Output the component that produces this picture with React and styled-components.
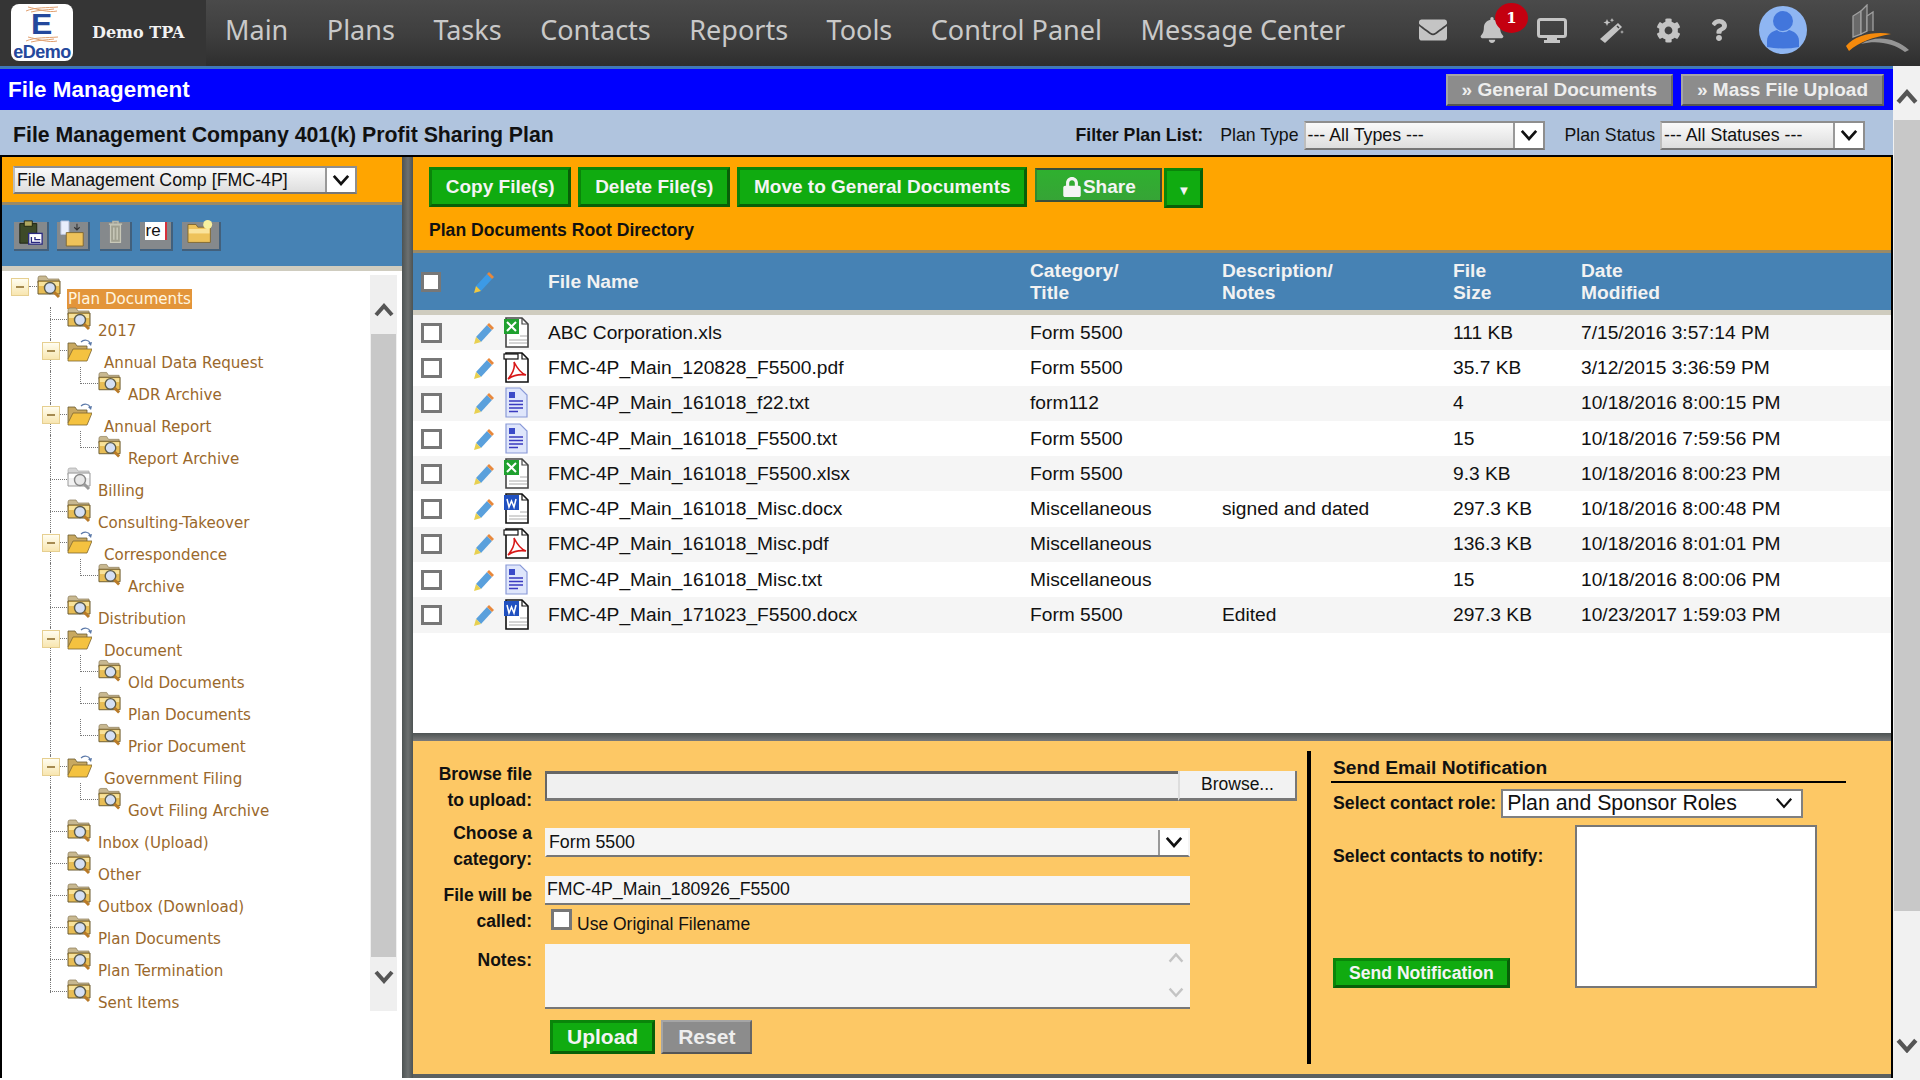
import React from 'react';
import styled, { createGlobalStyle } from 'styled-components';
import { FaEnvelope, FaBell, FaCog, FaQuestion, FaLock } from 'react-icons/fa';

const GlobalStyle = createGlobalStyle`
  html, body {
    margin: 0;
    padding: 0;
    background: #fff;
    overflow: hidden;
  }
  * {
    box-sizing: border-box;
  }
`;

const sans = `"Liberation Sans", Arial, sans-serif`;

const Page = styled.div`
  width: 1920px;
  height: 1080px;
  display: flex;
  flex-direction: column;
  font-family: ${sans};
  color: #111;
  overflow: hidden;
`;

/* top header */
const Header = styled.header`
  height: 66px;
  flex: none;
  display: flex;
  align-items: stretch;
  padding-right: 10px;
  background: linear-gradient(#4a4a4a, #3e3e3e 55%, #2e2e2e);
`;

const Brand = styled.div`
  width: 206px;
  flex: none;
  display: flex;
  align-items: center;
  padding-left: 11px;
  background: #353535;
`;

const LogoBox = styled.div`
  width: 62px;
  height: 57px;
  margin-top: -1px;
  padding-top: 2px;
  background: #fff;
  border-radius: 8px;
  display: flex;
  flex-direction: column;
  align-items: center;
  overflow: hidden;
`;

const LogoE = styled.span`
  font-size: 29px;
  font-weight: 700;
  line-height: 21px;
  height: 21px;
  margin: 1px 0;
  color: #24489c;
  transform: scaleX(1.1);
`;

const LogoWord = styled.span`
  margin-top: 2px;
  font-size: 18px;
  font-weight: 700;
  line-height: 15px;
  color: #24489c;
  letter-spacing: -0.5px;
`;

const TpaName = styled.span`
  margin-left: 19px;
  margin-top: -2px;
  font-family: "DejaVu Serif", serif;
  font-size: 16px;
  font-weight: 700;
  color: #f2f2f2;
  white-space: nowrap;
`;

const Nav = styled.nav`
  display: flex;
  align-items: center;
  gap: 38.5px;
  padding-left: 19px;
  padding-bottom: 7px;
`;

const NavItem = styled.a`
  font-family: "Noto Sans", sans-serif;
  font-size: 27px;
  color: #c9c9c9;
  white-space: nowrap;
`;

const HeaderTools = styled.div`
  margin-left: auto;
  display: flex;
  align-items: center;
  gap: 32px;
  color: #c4c4c4;
  padding-bottom: 6px;
`;

const BellWrap = styled.span`
  position: relative;
  display: flex;
`;

const Badge = styled.span`
  position: absolute;
  left: 16px;
  top: -14px;
  width: 33px;
  height: 30px;
  border-radius: 50%;
  background: #c40010;
  color: #fff;
  font-family: "DejaVu Serif", serif;
  font-size: 15px;
  font-weight: 700;
  line-height: 30px;
  text-align: center;
`;

const HelpIcon = styled(FaQuestion)`
  margin-left: -5px;
`;

const AvatarArt = styled.svg`
  margin-left: -3px;
`;

const BrandMark = styled.svg`
  margin-left: 6px;
  margin-top: -4px;
`;

/* body */
const Body = styled.div`
  flex: 1;
  display: flex;
  min-height: 0;
`;

const Content = styled.div`
  flex: 1;
  min-width: 0;
  display: flex;
  flex-direction: column;
  border-top: 3px solid #3f78b8;
`;

const PageScroll = styled.div`
  width: 27px;
  flex: none;
  display: flex;
  flex-direction: column;
  background: #f1f1f1;
`;

const ScrollBtn = styled.div`
  height: ${(p) => p.$h}px;
  flex: none;
  display: flex;
  align-items: flex-start;
  justify-content: center;
  padding-top: ${(p) => p.$pt}px;
`;

const ScrollThumb = styled.div`
  flex: 1;
  margin-left: 1px;
  background: #c8c8c8;
`;

const TitleBar = styled.div`
  height: 41px;
  flex: none;
  display: flex;
  align-items: center;
  justify-content: space-between;
  padding: 0 9px 0 8px;
  background: #0000ff;
`;

const PageTitle = styled.h1`
  margin: 0;
  font-size: 22.4px;
  font-weight: 700;
  color: #fff;
`;

const TitleActions = styled.div`
  display: flex;
  gap: 8px;
`;

const GreyButton = styled.button`
  height: ${(p) => p.$h || 32}px;
  padding: 0 ${(p) => p.$pad || 14}px;
  font-family: ${sans};
  font-size: ${(p) => p.$size || 19}px;
  font-weight: 700;
  color: #eee;
  background: #8c8c8c;
  border: 2px solid;
  border-color: #a5a5a5 #666 #555 #a5a5a5;
  white-space: nowrap;
`;

const PlanBar = styled.div`
  height: 45px;
  flex: none;
  display: flex;
  align-items: center;
  padding: 5px 28px 0 13px;
  background: #b0c4de;
`;

const PlanName = styled.h2`
  margin: 0 auto 0 0;
  font-size: 21.3px;
  font-weight: 700;
  color: #111;
`;

const BoldLabel = styled.span`
  font-size: 17.7px;
  font-weight: 700;
  white-space: nowrap;
`;

const PlainLabel = styled.span`
  font-size: 17.7px;
  white-space: nowrap;
  margin-left: ${(p) => p.$ml || 0}px;
  margin-right: 5px;
`;

const SelectBox = styled.div`
  width: ${(p) => p.$w}px;
  height: ${(p) => p.$h || 29}px;
  flex: none;
  display: flex;
  align-items: center;
  font-size: 17.8px;
  background: ${(p) => (p.$flat ? '#f5f5f5' : 'linear-gradient(#fafafa, #dedede)')};
  border: 2px solid;
  border-color: ${(p) => (p.$flat ? '#f5f5f5 #f5f5f5 #777 #f5f5f5' : '#8e8e8e #8e8e8e #777 #bdbdbd')};
`;

const SelectText = styled.span`
  flex: 1;
  padding-left: 2px;
  white-space: nowrap;
  overflow: hidden;
`;

const SelectArrow = styled.span`
  width: 30px;
  height: 100%;
  flex: none;
  display: flex;
  align-items: center;
  justify-content: center;
  background: #fff;
  border-left: 2px solid #999;
`;

const Workspace = styled.div`
  height: 923px;
  flex: none;
  display: flex;
  border-top: 2px solid #000;
  border-left: 2px solid #000;
  border-right: 2px solid #000;
`;

const Sidebar = styled.aside`
  width: 400px;
  flex: none;
  display: flex;
  flex-direction: column;
`;

const SideSelectRow = styled.div`
  height: 48px;
  flex: none;
  display: flex;
  padding: 9px 0 0 11px;
  background: #ffa500;
  border-bottom: 3px solid #9a8a66;
`;

const SideTools = styled.div`
  height: 61px;
  flex: none;
  display: flex;
  align-items: flex-start;
  padding: 17px 0 0 12px;
  background: #4682b4;
`;

const ToolBtn = styled.span`
  width: ${(p) => p.$w}px;
  height: 29px;
  margin-right: ${(p) => p.$mr}px;
  flex: none;
  display: flex;
  align-items: flex-start;
  justify-content: center;
  background: #85898c;
  border-bottom: 2px solid #42607c;
  border-right: 2px solid #42607c;
`;

const ToolArt = styled.svg`
  margin-top: -2px;
  flex: none;
`;

const ReMark = styled.span`
  width: 22px;
  height: 18px;
  margin-top: 0;
  padding-left: 1px;
  background: #fff;
  border-right: 2px solid #d8303a;
  font-size: 17px;
  line-height: 17px;
  color: #111;
`;

const TreeArea = styled.div`
  flex: 1;
  min-height: 0;
  display: flex;
  background: #fff;
  border-top: 5px solid #cfccbf;
  padding: 4px 5px 0 0;
`;

const Tree = styled.ul`
  flex: 1;
  margin: 0;
  padding: 0;
  list-style: none;
`;

const TreeRow = styled.li`
  position: relative;
  height: 32px;
  display: flex;
  align-items: flex-start;
  padding-left: ${(p) => p.$pad}px;
  &::before {
    content: ${(p) => (p.$trunk ? '""' : 'none')};
    position: absolute;
    left: 48px;
    top: 0;
    height: ${(p) => (p.$last ? 14 : 32)}px;
    border-left: 1px dotted #777;
    z-index: 0;
  }
`;

const Toggle = styled.span`
  width: 18px;
  height: 18px;
  flex: none;
  margin-top: 3px;
  position: relative;
  z-index: 1;
  display: flex;
  align-items: center;
  justify-content: center;
  background: linear-gradient(#fffdf0, #f8e6b0);
  border: 1px solid #e6cf90;
  &::after {
    content: '';
    width: 8px;
    height: 2px;
    background: #a58a50;
  }
`;

const Connector = styled.span`
  width: ${(p) => p.$w}px;
  height: ${(p) => p.$h || 13}px;
  margin-top: ${(p) => p.$top || 0}px;
  flex: none;
  border-bottom: 1px dotted #777;
  border-left: ${(p) => (p.$elbow ? '1px dotted #777' : '0')};
`;

const FolderArt = styled.svg`
  flex: none;
  position: relative;
  z-index: 1;
`;

const TreeLabel = styled.span`
  align-self: flex-end;
  height: 20px;
  margin-left: ${(p) => p.$gap}px;
  margin-bottom: -2px;
  padding: 0 ${(p) => (p.$active ? 1 : 0)}px;
  font-family: "DejaVu Sans", sans-serif;
  font-size: 15.1px;
  line-height: 20px;
  white-space: nowrap;
  color: ${(p) => (p.$active ? '#fff6e0' : '#9a682b')};
  background: ${(p) => (p.$active ? '#e3953a' : 'transparent')};
`;

const TreeScroll = styled.div`
  width: 27px;
  height: 736px;
  flex: none;
  display: flex;
  flex-direction: column;
  background: #efefef;
`;

const TreeThumb = styled.div`
  flex: 1;
  margin: 0 1px;
  background: #c8c8c8;
`;

const VDivider = styled.div`
  width: 11px;
  flex: none;
  background: linear-gradient(90deg, #4d5353, #6c7070 55%, #4d5353);
`;

const MainCol = styled.main`
  flex: 1;
  min-width: 0;
  display: flex;
  flex-direction: column;
`;

const ActionBar = styled.div`
  height: 96px;
  flex: none;
  padding: 10px 0 0 16px;
  background: #ffa500;
  border-bottom: 3px solid #9a8a66;
`;

const ActionRow = styled.div`
  display: flex;
  align-items: flex-start;
  gap: 7px;
`;

const GreenButton = styled.button`
  height: ${(p) => p.$h || 40}px;
  padding: 0 ${(p) => p.$pad || 13.8}px;
  font-family: ${sans};
  font-size: ${(p) => p.$size || 19}px;
  font-weight: 700;
  color: #f4f4f4;
  background: #10ab10;
  border: 3px solid;
  border-color: #0a850a #085f08 #085f08 #0a850a;
  white-space: nowrap;
`;

const ShareGroup = styled.div`
  display: flex;
  align-items: flex-start;
  margin-left: 1px;
  gap: 2px;
  margin-top: 1px;
`;

const ShareButton = styled.button`
  width: 127px;
  height: 34px;
  display: flex;
  align-items: center;
  justify-content: center;
  gap: 1px;
  padding: 4px 0 0;
  font-family: ${sans};
  font-size: 19px;
  font-weight: 700;
  color: #f4f4f4;
  background: linear-gradient(#2fb02f, #36a436);
  border: 2px solid;
  border-color: #3a4e3a #3a4e3a #3a4e3a #2f8a2f;
`;

const ShareCaret = styled(GreenButton)`
  width: 39px;
  padding: 4px 0 0;
  font-size: 13px;
`;

const DirTitle = styled.div`
  margin-top: 12px;
  font-size: 17.6px;
  font-weight: 700;
  color: #111;
`;

const cols = '53px 29px 45px 482px 192px 231px 128px 1fr';

const TableHead = styled.div`
  height: 62px;
  flex: none;
  display: grid;
  grid-template-columns: ${cols};
  align-items: center;
  padding-left: 8px;
  background: #4682b4;
  border-bottom: 5px solid #cfccbf;
  font-size: 19.2px;
  font-weight: 700;
  line-height: 22px;
  color: #f2f2f2;
`;

const TableBody = styled.div`
  flex: 1;
  min-height: 0;
  background: #fff;
`;

const FileRow = styled.div`
  height: 35.3px;
  display: grid;
  grid-template-columns: ${cols};
  align-items: center;
  padding-left: 8px;
  background: ${(p) => (p.$odd ? '#f5f5f5' : '#fff')};
  font-size: 19.2px;
  white-space: nowrap;
`;

const Check = styled.span`
  width: ${(p) => p.$s || 21}px;
  height: ${(p) => p.$s || 20}px;
  flex: none;
  display: block;
  background: #fff;
  border: 3px solid #777;
`;

const HDivider = styled.div`
  height: 8px;
  flex: none;
  background: linear-gradient(#4d5353, #7a7a7a);
`;

const UploadPanel = styled.section`
  height: 333px;
  flex: none;
  display: flex;
  background: #fdc865;
`;

const UploadForm = styled.form`
  width: 894px;
  flex: none;
  display: grid;
  grid-template-columns: 119px 1fr;
  column-gap: 13px;
  align-content: start;
  padding-top: 19.5px;
`;

const FieldLabel = styled.label`
  font-size: 17.5px;
  font-weight: 700;
  line-height: 26px;
  text-align: right;
  margin-top: ${(p) => p.$mt || 0}px;
`;

const FieldCell = styled.div`
  margin-top: ${(p) => p.$mt || 0}px;
  display: flex;
  flex-direction: column;
  align-items: flex-start;
`;

const FileInputRow = styled.div`
  display: flex;
  height: 30px;
`;

const FileBox = styled.div`
  width: 633px;
  background: #f0f0f0;
  border-top: 3px solid #666;
  border-left: 2px solid #666;
  border-bottom: 3px solid #777;
`;

const BrowseBtn = styled.div`
  width: 119px;
  display: flex;
  align-items: center;
  justify-content: center;
  font-size: 17.5px;
  background: #f2f2f2;
  border-right: 2px solid #777;
  border-bottom: 3px solid #777;
  border-left: 2px solid #ddd;
`;

const TextBox = styled.div`
  width: 645px;
  height: 29px;
  padding-left: 2px;
  font-size: 17.7px;
  line-height: 26px;
  background: #f5f5f5;
  border-bottom: 2px solid #777;
`;

const OriginalRow = styled.div`
  display: flex;
  align-items: flex-start;
  margin-top: 4px;
  padding-left: 6px;
  gap: 5px;
  font-size: 17.5px;
`;

const OriginalLabel = styled.span`
  margin-top: 5px;
`;

const NotesBox = styled.div`
  width: 645px;
  height: 65px;
  display: flex;
  flex-direction: column;
  align-items: flex-end;
  justify-content: space-between;
  padding: 8px 6px 8px 0;
  background: #f5f5f5;
  border-bottom: 2px solid #777;
`;

const FormActions = styled.div`
  display: flex;
  gap: 6px;
  margin-top: 11px;
  padding-left: 5px;
`;

const NotifyCol = styled.div`
  flex: 1;
  display: flex;
  flex-direction: column;
  margin: 10px 0;
  padding-left: 20px;
  border-left: 4px solid #000;
`;

const NotifyTitle = styled.h3`
  width: 515px;
  margin: 0;
  padding: 6px 0 2px 2px;
  font-size: 19.2px;
  font-weight: 700;
  border-bottom: 2px solid #000;
`;

const RoleRow = styled.div`
  display: flex;
  align-items: center;
  gap: 5px;
  margin-top: 6px;
  padding-left: 2px;
`;

const RoleSelect = styled.div`
  width: 302px;
  height: 29px;
  display: flex;
  align-items: center;
  justify-content: space-between;
  padding: 0 8px 0 4px;
  font-size: 21.3px;
  background: #fff;
  border: 2px solid #808080;
`;

const NotifyBody = styled.div`
  display: flex;
  margin-top: 7px;
  padding-left: 2px;
`;

const NotifyLeft = styled.div`
  width: 242px;
  display: flex;
  flex-direction: column;
  justify-content: space-between;
  align-items: flex-start;
`;

const NotifyHint = styled(BoldLabel)`
  margin-top: 21px;
`;

const ContactList = styled.div`
  width: 242px;
  height: 163px;
  background: #fff;
  border: 2px solid #777;
`;

const BottomBand = styled.div`
  height: 4px;
  flex: none;
  background: #5c6060;
`;

const Chevron = ({ up, size = 20, color = '#555', w = 4 }) => (
  <svg width={size} height={size * 0.7} viewBox="0 0 20 14" fill="none">
    <polyline
      points={up ? '2,12 10,3 18,12' : '2,2 10,11 18,2'}
      stroke={color}
      strokeWidth={w}
    />
  </svg>
);

const LogoScribble = () => (
  <svg width="34" height="7" viewBox="0 0 34 7" fill="none" stroke="#e0a070" strokeWidth="1">
    <path d="M1 5 C10 1 22 2 33 1" />
    <path d="M3 1 C12 3 24 7 32 5" />
    <path d="M6 6 C14 4 22 4 29 3" />
  </svg>
);

const MonitorIcon = () => (
  <svg width="30" height="25" viewBox="0 0 30 25">
    <rect x="1.5" y="1.5" width="27" height="17" rx="2" fill="none" stroke="#c4c4c4" strokeWidth="3" />
    <rect x="10" y="19" width="10" height="3" fill="#c4c4c4" />
    <rect x="7" y="22" width="16" height="3" fill="#c4c4c4" />
  </svg>
);

const WandIcon = () => (
  <svg width="25" height="25" viewBox="0 0 25 25" fill="#c4c4c4">
    <path d="M19 5 L23 9 L6 25 L1 21 Z" />
    <path d="M18 8 L20 10" stroke="#3f3f3f" strokeWidth="1.5" />
    <path d="M8 1 L9 3.5 L11.5 4.5 L9 5.5 L8 8 L7 5.5 L4.5 4.5 L7 3.5 Z" />
    <path d="M13 0 L13.6 1.6 L15.2 2.2 L13.6 2.8 L13 4.4 L12.4 2.8 L10.8 2.2 L12.4 1.6 Z" />
    <path d="M23 12 L23.5 13.5 L25 14 L23.5 14.5 L23 16 L22.5 14.5 L21 14 L22.5 13.5 Z" />
  </svg>
);

const Avatar = () => (
  <AvatarArt width="48" height="48" viewBox="0 0 48 48">
    <circle cx="24" cy="24" r="24" fill="#8fb6f2" />
    <circle cx="24" cy="15" r="10" fill="#4276dc" />
    <path d="M8 41 V35 C8 28 14 25 18 24 C21 27 27 27 30 24 C34 25 40 28 40 35 V41 Q24 44 8 41 Z" fill="#4276dc" />
  </AvatarArt>
);

const BuildingMark = () => (
  <BrandMark width="65" height="49" viewBox="0 0 65 49" fill="none">
    <path d="M8 33 V12 L16 7 V30 Z" fill="#6a6a6a" stroke="#a0a0a0" strokeWidth="1.3" />
    <path d="M16 30 V7 L22 1 V27 Z" fill="#555" stroke="#a0a0a0" strokeWidth="1.3" />
    <path d="M22 27 V12 L28 8 V27" fill="#555" stroke="#a0a0a0" strokeWidth="1.3" />
    <path d="M1 42 C10 31 30 27 46 30 C28 33 14 38 4 47 Z" fill="#f58a0c" />
    <path d="M16 40 C30 31 50 33 64 46 L60 48 C48 39 32 36 16 40 Z" fill="#959595" />
  </BrandMark>
);

const Folder = ({ muted, small }) => (
  <FolderArt width={small ? 24 : 25} height="24" viewBox="0 0 25 24">
    <path d="M1 3 Q1 1 3 1 H9 L11 4 H22 V8 H1 Z" fill={muted ? '#d5d5d5' : '#c8b890'} stroke={muted ? '#aaa' : '#8a7a56'} strokeWidth="0.7" />
    <path d="M1 6 H23 V19 H1 Z" fill={muted ? '#f2f2f2' : '#e8bd55'} stroke={muted ? '#9a9a9a' : '#6b5a30'} strokeWidth="1" />
    <path d="M2 7 H22 V11 H2 Z" fill={muted ? '#fff' : '#f8e29a'} />
    <circle cx="13" cy="13" r="5.5" fill={muted ? '#e8e8e8' : '#d5e0f5'} stroke={muted ? '#888' : '#5b5b4a'} strokeWidth="1.4" />
    <path d="M17 17 L22 22" stroke={muted ? '#999' : '#b87a28'} strokeWidth="3" />
  </FolderArt>
);

const OpenFolder = () => (
  <FolderArt width="25" height="24" viewBox="0 0 25 24">
    <path d="M1 4 H8 L10 7 H20 V20 H1 Z" fill="#c8a860" stroke="#6b5a30" strokeWidth="0.8" />
    <path d="M1 20 L6 10 H25 L20 22 H1 Z" fill="#f4c240" stroke="#7b6430" strokeWidth="0.8" />
    <path d="M14 3 C17 0 22 1 23 4" fill="none" stroke="#5a78a8" strokeWidth="1.2" />
    <path d="M24 7 L21 4 L25 3 Z" fill="#5a78a8" />
  </FolderArt>
);

const Pencil = ({ head }) => (
  <svg width="21" height="22" viewBox="0 0 21 22">
    <path d="M2 15 L13 3 L18 8 L7 20 Z" fill={head ? '#3c9ae6' : '#5aa0dc'} />
    <path d="M13 3 L15 1 L20 6 L18 8 Z" fill="#e8883c" />
    <path d="M2 15 L7 20 L0 22 Z" fill={head ? '#f0c840' : '#e8d050'} />
  </svg>
);

const DocShell = ({ children, dark }) => (
  <svg width="27" height="32" viewBox="0 0 27 32">
    <path d="M3 1 H19 L25 7 V30 H3 Z" fill="#fff" stroke={dark ? '#111' : '#444'} strokeWidth="1.6" />
    <path d="M19 1 V7 H25" fill="none" stroke={dark ? '#111' : '#444'} strokeWidth="1.2" />
    {children}
  </svg>
);

const XlsIcon = () => (
  <DocShell>
    <rect x="1" y="2" width="15" height="15" fill="#1fa12f" />
    <path d="M4 5 L13 14 M13 5 L4 14" stroke="#fff" strokeWidth="2" />
    <path d="M17 19 H24 M6 23 H24 M6 26 H24" stroke="#aaa" strokeWidth="1" />
  </DocShell>
);

const PdfIcon = () => (
  <DocShell dark>
    <rect x="1" y="2" width="14" height="5" fill="#fff" stroke="#111" strokeWidth="1.2" />
    <path d="M5 27 C11 20 12 14 11 10 C14 16 17 21 23 23 C17 22 11 23 5 27 Z" fill="none" stroke="#d81818" strokeWidth="1.6" />
  </DocShell>
);

const TxtIcon = () => (
  <svg width="27" height="32" viewBox="0 0 27 32">
    <path d="M3 1 H17 L24 8 V30 H3 Z" fill="#dfe6fb" stroke="#8a9ad8" strokeWidth="1.2" />
    <rect x="6" y="5" width="6" height="6" fill="#3a4ac8" />
    <path d="M6 14 H20 M6 17.5 H20 M6 21 H20 M6 24.5 H15" stroke="#3a3ac0" strokeWidth="1.6" />
  </svg>
);

const DocxIcon = () => (
  <DocShell dark>
    <rect x="1" y="2" width="15" height="15" fill="#2050c0" />
    <path d="M4 6 L6 14 L8.5 8 L11 14 L13 6" fill="none" stroke="#fff" strokeWidth="1.5" />
    <path d="M17 19 H24 M6 23 H24 M6 26 H24" stroke="#aaa" strokeWidth="1" />
  </DocShell>
);

const fileIcons = { xls: XlsIcon, pdf: PdfIcon, txt: TxtIcon, doc: DocxIcon };

const files = [
  { name: 'ABC Corporation.xls', icon: 'xls', cat: 'Form 5500', notes: '', size: '111 KB', date: '7/15/2016 3:57:14 PM' },
  { name: 'FMC-4P_Main_120828_F5500.pdf', icon: 'pdf', cat: 'Form 5500', notes: '', size: '35.7 KB', date: '3/12/2015 3:36:59 PM' },
  { name: 'FMC-4P_Main_161018_f22.txt', icon: 'txt', cat: 'form112', notes: '', size: '4', date: '10/18/2016 8:00:15 PM' },
  { name: 'FMC-4P_Main_161018_F5500.txt', icon: 'txt', cat: 'Form 5500', notes: '', size: '15', date: '10/18/2016 7:59:56 PM' },
  { name: 'FMC-4P_Main_161018_F5500.xlsx', icon: 'xls', cat: 'Form 5500', notes: '', size: '9.3 KB', date: '10/18/2016 8:00:23 PM' },
  { name: 'FMC-4P_Main_161018_Misc.docx', icon: 'doc', cat: 'Miscellaneous', notes: 'signed and dated', size: '297.3 KB', date: '10/18/2016 8:00:48 PM' },
  { name: 'FMC-4P_Main_161018_Misc.pdf', icon: 'pdf', cat: 'Miscellaneous', notes: '', size: '136.3 KB', date: '10/18/2016 8:01:01 PM' },
  { name: 'FMC-4P_Main_161018_Misc.txt', icon: 'txt', cat: 'Miscellaneous', notes: '', size: '15', date: '10/18/2016 8:00:06 PM' },
  { name: 'FMC-4P_Main_171023_F5500.docx', icon: 'doc', cat: 'Form 5500', notes: 'Edited', size: '297.3 KB', date: '10/23/2017 1:59:03 PM' },
];

// kind: root, open (has children), leaf (level 1), child (level 2)
const tree = [
  { label: 'Plan Documents', kind: 'root' },
  { label: '2017', kind: 'leaf' },
  { label: 'Annual Data Request', kind: 'open' },
  { label: 'ADR Archive', kind: 'child' },
  { label: 'Annual Report', kind: 'open' },
  { label: 'Report Archive', kind: 'child' },
  { label: 'Billing', kind: 'leaf', muted: true },
  { label: 'Consulting-Takeover', kind: 'leaf' },
  { label: 'Correspondence', kind: 'open' },
  { label: 'Archive', kind: 'child' },
  { label: 'Distribution', kind: 'leaf' },
  { label: 'Document', kind: 'open' },
  { label: 'Old Documents', kind: 'child' },
  { label: 'Plan Documents', kind: 'child' },
  { label: 'Prior Document', kind: 'child' },
  { label: 'Government Filing', kind: 'open' },
  { label: 'Govt Filing Archive', kind: 'child' },
  { label: 'Inbox (Upload)', kind: 'leaf' },
  { label: 'Other', kind: 'leaf' },
  { label: 'Outbox (Download)', kind: 'leaf' },
  { label: 'Plan Documents', kind: 'leaf' },
  { label: 'Plan Termination', kind: 'leaf' },
  { label: 'Sent Items', kind: 'leaf' },
];

const navItems = ['Main', 'Plans', 'Tasks', 'Contacts', 'Reports', 'Tools', 'Control Panel', 'Message Center'];

function TreeNode({ node, last }) {
  const { kind, label, muted } = node;
  if (kind === 'root') {
    return (
      <TreeRow $pad={9}>
        <Toggle />
        <Connector $w={8} $h={12} />
        <Folder />
        <TreeLabel $gap={5} $active>{label}</TreeLabel>
      </TreeRow>
    );
  }
  if (kind === 'open') {
    return (
      <TreeRow $pad={40} $trunk>
        <Toggle />
        <Connector $w={7} $h={12} />
        <OpenFolder />
        <TreeLabel $gap={12}>{label}</TreeLabel>
      </TreeRow>
    );
  }
  if (kind === 'child') {
    return (
      <TreeRow $pad={78} $trunk>
        <Connector $w={18} $h={17} $top={-4} $elbow />
        <Folder small />
        <TreeLabel $gap={6}>{label}</TreeLabel>
      </TreeRow>
    );
  }
  return (
    <TreeRow $pad={48} $trunk $last={last}>
      <Connector $w={17} />
      <Folder muted={muted} />
      <TreeLabel $gap={6}>{label}</TreeLabel>
    </TreeRow>
  );
}

export default function App() {
  return (
    <Page>
      <GlobalStyle />
      <Header>
        <Brand>
          <LogoBox>
            <LogoScribble />
            <LogoE>E</LogoE>
            <LogoScribble />
            <LogoWord>eDemo</LogoWord>
          </LogoBox>
          <TpaName>Demo TPA</TpaName>
        </Brand>
        <Nav>
          {navItems.map((item) => (
            <NavItem key={item}>{item}</NavItem>
          ))}
        </Nav>
        <HeaderTools>
          <FaEnvelope size={28} />
          <BellWrap>
            <FaBell size={26} />
            <Badge>1</Badge>
          </BellWrap>
          <MonitorIcon />
          <WandIcon />
          <FaCog size={25} />
          <HelpIcon size={22} />
          <Avatar />
          <BuildingMark />
        </HeaderTools>
      </Header>
      <Body>
        <Content>
          <TitleBar>
            <PageTitle>File Management</PageTitle>
            <TitleActions>
              <GreyButton>» General Documents</GreyButton>
              <GreyButton>» Mass File Upload</GreyButton>
            </TitleActions>
          </TitleBar>
          <PlanBar>
            <PlanName>File Management Company 401(k) Profit Sharing Plan</PlanName>
            <BoldLabel>Filter Plan List:</BoldLabel>
            <PlainLabel $ml={17}>Plan Type</PlainLabel>
            <SelectBox $w={241}>
              <SelectText>--- All Types ---</SelectText>
              <SelectArrow><Chevron size={18} color="#111" w={3} /></SelectArrow>
            </SelectBox>
            <PlainLabel $ml={20}>Plan Status</PlainLabel>
            <SelectBox $w={205}>
              <SelectText>--- All Statuses ---</SelectText>
              <SelectArrow><Chevron size={18} color="#111" w={3} /></SelectArrow>
            </SelectBox>
          </PlanBar>
          <Workspace>
            <Sidebar>
              <SideSelectRow>
                <SelectBox $w={344} $h={28}>
                  <SelectText>File Management Comp [FMC-4P]</SelectText>
                  <SelectArrow><Chevron size={18} color="#111" w={3} /></SelectArrow>
                </SelectBox>
              </SideSelectRow>
              <SideTools>
                <ToolBtn $w={35} $mr={8}>
                  <ToolArt width="25" height="25" viewBox="0 0 28 28">
                    <path d="M2 4 H21 V26 H2 Z" fill="#3d4a28" stroke="#1a2010" />
                    <path d="M7 1 H16 V7 H7 Z" fill="#b0a860" stroke="#1a2010" />
                    <rect x="12" y="15" width="15" height="12" fill="#fff" stroke="#2a2a80" strokeWidth="1.5" />
                    <path d="M15 19 V25 H25 M19 19 V22 H25" fill="none" stroke="#2a2a80" strokeWidth="1.5" />
                  </ToolArt>
                </ToolBtn>
                <ToolBtn $w={33} $mr={10}>
                  <ToolArt width="25" height="27" viewBox="0 0 28 30">
                    <path d="M1 1 H10 V16 H1 Z" fill="#e8eefc" stroke="#b8c4e0" />
                    <path d="M7 14 H26 V29 H7 Z" fill="#eec25a" stroke="#7b6430" />
                    <path d="M19 4 V11 M16 8 L19 11 L22 8" fill="none" stroke="#333" strokeWidth="1.2" />
                  </ToolArt>
                </ToolBtn>
                <ToolBtn $w={32} $mr={8}>
                  <ToolArt width="15" height="24" viewBox="0 0 18 29">
                    <path d="M1 5 H17 M6 5 V2 H12 V5" fill="none" stroke="#b8b8a8" strokeWidth="2" />
                    <path d="M3 6 H15 V27 H3 Z" fill="#a0a090" stroke="#c8c8b8" strokeWidth="1.5" />
                    <path d="M7 9 V24 M11 9 V24" stroke="#d0d0c0" strokeWidth="1.5" />
                  </ToolArt>
                </ToolBtn>
                <ToolBtn $w={33} $mr={9}>
                  <ReMark>re</ReMark>
                </ToolBtn>
                <ToolBtn $w={39} $mr={0}>
                  <ToolArt width="27" height="26" viewBox="0 0 30 29">
                    <path d="M1 5 H10 L12 8 H26 V25 H1 Z" fill="#eec25a" stroke="#7b6430" />
                    <path d="M2 10 H25 V15 H2 Z" fill="#fae39c" />
                    <circle cx="23" cy="5" r="5" fill="#f7f0a0" />
                  </ToolArt>
                </ToolBtn>
              </SideTools>
              <TreeArea>
                <Tree>
                  {tree.map((node, i) => (
                    <TreeNode key={i} node={node} last={i === tree.length - 1} />
                  ))}
                </Tree>
                <TreeScroll>
                  <ScrollBtn $h={59} $pt={28}><Chevron up /></ScrollBtn>
                  <TreeThumb />
                  <ScrollBtn $h={54} $pt={13}><Chevron /></ScrollBtn>
                </TreeScroll>
              </TreeArea>
            </Sidebar>
            <VDivider />
            <MainCol>
              <ActionBar>
                <ActionRow>
                  <GreenButton>Copy File(s)</GreenButton>
                  <GreenButton>Delete File(s)</GreenButton>
                  <GreenButton>Move to General Documents</GreenButton>
                  <ShareGroup>
                    <ShareButton><FaLock size={20} />Share</ShareButton>
                    <ShareCaret>▼</ShareCaret>
                  </ShareGroup>
                </ActionRow>
                <DirTitle>Plan Documents Root Directory</DirTitle>
              </ActionBar>
              <TableHead>
                <Check $s={20} />
                <Pencil head />
                <span />
                <span>File Name</span>
                <span>Category/<br />Title</span>
                <span>Description/<br />Notes</span>
                <span>File<br />Size</span>
                <span>Date<br />Modified</span>
              </TableHead>
              <TableBody>
                {files.map((f, i) => {
                  const Icon = fileIcons[f.icon];
                  return (
                    <FileRow key={f.name} $odd={i % 2 === 0}>
                      <Check />
                      <Pencil />
                      <Icon />
                      <span>{f.name}</span>
                      <span>{f.cat}</span>
                      <span>{f.notes}</span>
                      <span>{f.size}</span>
                      <span>{f.date}</span>
                    </FileRow>
                  );
                })}
              </TableBody>
              <HDivider />
              <UploadPanel>
                <UploadForm>
                  <FieldLabel>Browse file<br />to upload:</FieldLabel>
                  <FieldCell $mt={10}>
                    <FileInputRow>
                      <FileBox />
                      <BrowseBtn>Browse...</BrowseBtn>
                    </FileInputRow>
                  </FieldCell>
                  <FieldLabel $mt={7}>Choose a<br />category:</FieldLabel>
                  <FieldCell $mt={15}>
                    <SelectBox $w={645} $h={29} $flat>
                      <SelectText>Form 5500</SelectText>
                      <SelectArrow><Chevron size={18} color="#111" w={3} /></SelectArrow>
                    </SelectBox>
                  </FieldCell>
                  <FieldLabel $mt={10}>File will be<br />called:</FieldLabel>
                  <FieldCell $mt={4}>
                    <TextBox>FMC-4P_Main_180926_F5500</TextBox>
                    <OriginalRow>
                      <Check $s={21} />
                      <OriginalLabel>Use Original Filename</OriginalLabel>
                    </OriginalRow>
                  </FieldCell>
                  <FieldLabel $mt={12}>Notes:</FieldLabel>
                  <FieldCell $mt={9}>
                    <NotesBox>
                      <Chevron up size={16} color="#c4c4c4" w={3} />
                      <Chevron size={16} color="#c4c4c4" w={3} />
                    </NotesBox>
                    <FormActions>
                      <GreenButton $h={34} $size={21} $pad={14}>Upload</GreenButton>
                      <GreyButton $h={34} $size={21} $pad={15}>Reset</GreyButton>
                    </FormActions>
                  </FieldCell>
                </UploadForm>
                <NotifyCol>
                  <NotifyTitle>Send Email Notification</NotifyTitle>
                  <RoleRow>
                    <BoldLabel>Select contact role:</BoldLabel>
                    <RoleSelect>
                      Plan and Sponsor Roles
                      <Chevron size={18} color="#111" w={2.5} />
                    </RoleSelect>
                  </RoleRow>
                  <NotifyBody>
                    <NotifyLeft>
                      <NotifyHint>Select contacts to notify:</NotifyHint>
                      <GreenButton $h={30} $size={17.6} $pad={13}>Send Notification</GreenButton>
                    </NotifyLeft>
                    <ContactList />
                  </NotifyBody>
                </NotifyCol>
              </UploadPanel>
              <BottomBand />
            </MainCol>
          </Workspace>
        </Content>
        <PageScroll>
          <ScrollBtn $h={54} $pt={23}><Chevron up size={22} /></ScrollBtn>
          <ScrollThumb />
          <ScrollBtn $h={169} $pt={127}><Chevron size={22} /></ScrollBtn>
        </PageScroll>
      </Body>
    </Page>
  );
}
